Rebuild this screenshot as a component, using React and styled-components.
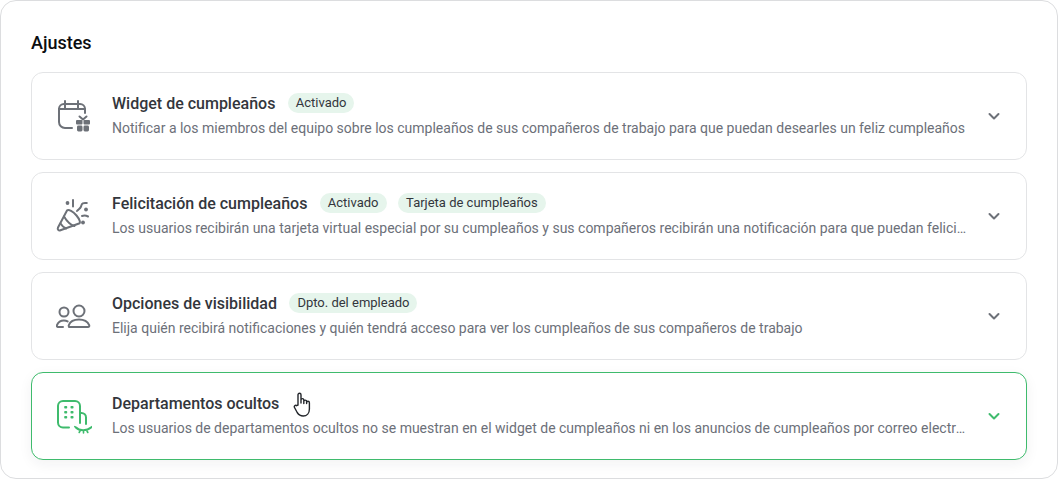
import React from 'react';
import styled, { createGlobalStyle } from 'styled-components';

const GlobalStyle = createGlobalStyle`
  html, body {
    margin: 0;
    padding: 0;
    background: #fff;
    font-family: Roboto, "Liberation Sans", sans-serif;
  }
`;

const Frame = styled.div`
  box-sizing: border-box;
  width: 1058px;
  height: 479px;
  padding: 30px 30px 18px;
  background: #fff;
  border: 1px solid #dcdddf;
  border-radius: 16px;
  overflow: hidden;
`;

const Heading = styled.h2`
  margin: 0 0 17px;
  height: 24px;
  font-size: 18px;
  line-height: 24px;
  font-weight: 500;
  color: #0b0d10;
`;

const List = styled.div`
  display: flex;
  flex-direction: column;
  gap: 12px;
`;

const Card = styled.div`
  position: relative;
  box-sizing: border-box;
  height: 88px;
  display: flex;
  align-items: center;
  padding: 0 24px;
  background: #fff;
  border: 1px solid ${({ $active }) => ($active ? '#3fbb6d' : '#e3e4e6')};
  border-radius: 12px;
  box-shadow: ${({ $active }) => ($active ? '0 4px 14px rgba(30, 40, 50, 0.06)' : 'none')};
`;

const IconSlot = styled.div`
  flex: none;
  width: 36px;
  height: 36px;
  margin-right: 20px;
  color: ${({ $active }) => ($active ? '#3fbb6d' : '#6d7178')};

  svg {
    display: block;
  }
`;

const Body = styled.div`
  flex: 1;
  min-width: 0;
  display: flex;
  flex-direction: column;
  gap: 3px;
  margin-bottom: 2px;
`;

const TitleRow = styled.div`
  display: flex;
  align-items: center;
  gap: 12.4px;
  height: 22px;
`;

const Title = styled.span`
  font-size: 16px;
  line-height: 22px;
  font-weight: 500;
  color: #33363c;
  white-space: nowrap;
`;

const Tags = styled.div`
  display: flex;
  gap: 11.6px;
  margin-bottom: 2px;
`;

const Tag = styled.span`
  height: 20px;
  padding: 0 8px;
  border-radius: 10px;
  background: #e6f5ec;
  color: #33363c;
  font-size: 13px;
  line-height: 20px;
  white-space: nowrap;
`;

const Description = styled.div`
  font-size: 14px;
  line-height: 20px;
  color: #6c7079;
  white-space: nowrap;
  overflow: hidden;
  text-overflow: ellipsis;
`;

const Chevron = styled.div`
  flex: none;
  width: 16px;
  height: 16px;
  margin-left: 17px;
  color: ${({ $active }) => ($active ? '#3fbb6d' : '#6d7178')};

  svg {
    display: block;
  }
`;

const Pointer = styled.svg`
  position: absolute;
  left: 261px;
  top: 19px;
  width: 19px;
  height: 26px;
`;

const CalendarGift = () => (
  <svg width="36" height="36" viewBox="0 0 36 36" fill="none" stroke="currentColor" strokeWidth="2" strokeLinecap="round" strokeLinejoin="round">
    <path d="M9 3v7M22 3v7M3 11h26" />
    <path d="M29 15v-4a5 5 0 0 0-5-5H8a5 5 0 0 0-5 5v13a6 6 0 0 0 6 6h7" />
    <g fill="currentColor" stroke="none">
      <rect x="20" y="22" width="6.500" height="4.500" rx="1" />
      <rect x="27.500" y="22" width="6.500" height="4.500" rx="1" />
      <rect x="21" y="27.500" width="5.500" height="6" rx="1.400" />
      <rect x="27.500" y="27.500" width="5.500" height="6" rx="1.400" />
    </g>
    <path d="M23.500 18.500l3.500 3 3.500-3" />
  </svg>
);

const PartyPopper = () => (
  <svg width="36" height="36" viewBox="0 0 36 36" fill="none" stroke="currentColor" strokeWidth="2" strokeLinecap="round" strokeLinejoin="round">
    <path d="M11 12.500L2 29.500c-.9 1.900.6 3.500 2.500 2.800L23 25.500c1.800-.8.800-4-2.500-8s-8-6.800-9.500-5z" />
    <path d="M8 18.500c2.800 4.700 7 8.500 10.500 9.500M4.500 25.500c1.500 2.400 3.300 4 5.500 5" />
    <path d="M21 13c1.200-1.700 3-2.300 3.800-4s.5-3 2-3.700 3-.3 4-.3" />
    <path d="M26 18c2-.7 4-.6 6 .5" />
    <path d="M17 2v6.500" />
    <g fill="currentColor" stroke="none">
      <circle cx="11.500" cy="5" r="1.900" />
      <circle cx="30" cy="11.500" r="1.900" />
      <circle cx="27" cy="24.500" r="1.900" />
    </g>
  </svg>
);

const People = () => (
  <svg width="36" height="36" viewBox="0 0 36 36" fill="none" stroke="currentColor" strokeWidth="2" strokeLinecap="round" strokeLinejoin="round">
    <circle cx="8" cy="14" r="4.500" />
    <circle cx="23" cy="13" r="5.500" />
    <path d="M7 29H2a1.200 1.200 0 0 1-1.100-1.700c1.200-3 3.900-4.800 7-4.800 1.300 0 2.600.3 3.700.9" />
    <path d="M13 29h19c1 0 1.600-.9 1.200-1.800-1.600-3.700-5.100-5.700-10.200-5.700s-8.800 2-10.200 5.700c-.4.900.2 1.800 1.200 1.800z" />
  </svg>
);

const BuildingHidden = () => (
  <svg width="36" height="36" viewBox="0 0 36 36" fill="none" stroke="currentColor" strokeWidth="2" strokeLinecap="round" strokeLinejoin="round">
    <path d="M13 29.500H7a5 5 0 0 1-5-5V8a5 5 0 0 1 5-5h12a5 5 0 0 1 5 5v17" />
    <path d="M24 15h1.500a4.500 4.500 0 0 1 4.500 4.500V26" />
    <path d="M20 29.500c3 3.500 11 3.500 15 0" />
    <path d="M24 33l-.8 1.500M27.500 33.500V35M31 33l.8 1.500M19.800 29.500l-1-.8M35 29.500l1-.8" strokeWidth="1.600" />
    <g fill="currentColor" stroke="none">
      <rect x="8.200" y="8" width="3" height="2.600" rx=".8" />
      <rect x="14.500" y="8" width="3" height="2.600" rx=".8" />
      <rect x="8.200" y="13" width="3" height="2.600" rx=".8" />
      <rect x="14.500" y="13" width="3" height="2.600" rx=".8" />
      <rect x="8.200" y="18" width="3" height="2.600" rx=".8" />
      <rect x="14.500" y="18" width="3" height="2.600" rx=".8" />
    </g>
  </svg>
);

const ChevronDown = () => (
  <svg width="16" height="16" viewBox="0 0 16 16" fill="none" stroke="currentColor" strokeWidth="2" strokeLinecap="round" strokeLinejoin="round">
    <path d="M3.500 6l4.500 4.500L12.500 6" />
  </svg>
);

const items = [
  {
    icon: <CalendarGift />,
    title: 'Widget de cumpleaños',
    tags: ['Activado'],
    text: 'Notificar a los miembros del equipo sobre los cumpleaños de sus compañeros de trabajo para que puedan desearles un feliz cumpleaños',
  },
  {
    icon: <PartyPopper />,
    title: 'Felicitación de cumpleaños',
    tags: ['Activado', 'Tarjeta de cumpleaños'],
    text: 'Los usuarios recibirán una tarjeta virtual especial por su cumpleaños y sus compañeros recibirán una notificación para que puedan felicitarlos',
  },
  {
    icon: <People />,
    title: 'Opciones de visibilidad',
    tags: ['Dpto. del empleado'],
    text: 'Elija quién recibirá notificaciones y quién tendrá acceso para ver los cumpleaños de sus compañeros de trabajo',
  },
  {
    icon: <BuildingHidden />,
    title: 'Departamentos ocultos',
    tags: [],
    text: 'Los usuarios de departamentos ocultos no se muestran en el widget de cumpleaños ni en los anuncios de cumpleaños por correo electrónico',
    active: true,
  },
];

export default function App() {
  return (
    <>
      <GlobalStyle />
      <Frame>
        <Heading>Ajustes</Heading>
        <List>
          {items.map((item) => (
            <Card key={item.title} $active={item.active}>
              <IconSlot $active={item.active}>{item.icon}</IconSlot>
              <Body>
                <TitleRow>
                  <Title>{item.title}</Title>
                  {item.tags.length > 0 && (
                    <Tags>
                      {item.tags.map((tag) => (
                        <Tag key={tag}>{tag}</Tag>
                      ))}
                    </Tags>
                  )}
                </TitleRow>
                <Description>{item.text}</Description>
              </Body>
              <Chevron $active={item.active}>
                <ChevronDown />
              </Chevron>
              {item.active && (
                <Pointer viewBox="0 0 19 26" fill="#fff" stroke="#23262b" strokeWidth="1.400" strokeLinejoin="round" strokeLinecap="round">
                  <path d="M5 13V2.800a1.500 1.500 0 0 1 3 0V11V8a1.400 1.400 0 0 1 2.800 0v3.500V9.500a1.400 1.400 0 0 1 2.800 0v2V10.700a1.400 1.400 0 0 1 2.800 0V17c0 4-2.500 7-6.200 7-3 0-4.500-1.200-6-3.500L1.500 15.500c-.8-1.300.8-2.800 2-1.800z" />
                </Pointer>
              )}
            </Card>
          ))}
        </List>
      </Frame>
    </>
  );
}
